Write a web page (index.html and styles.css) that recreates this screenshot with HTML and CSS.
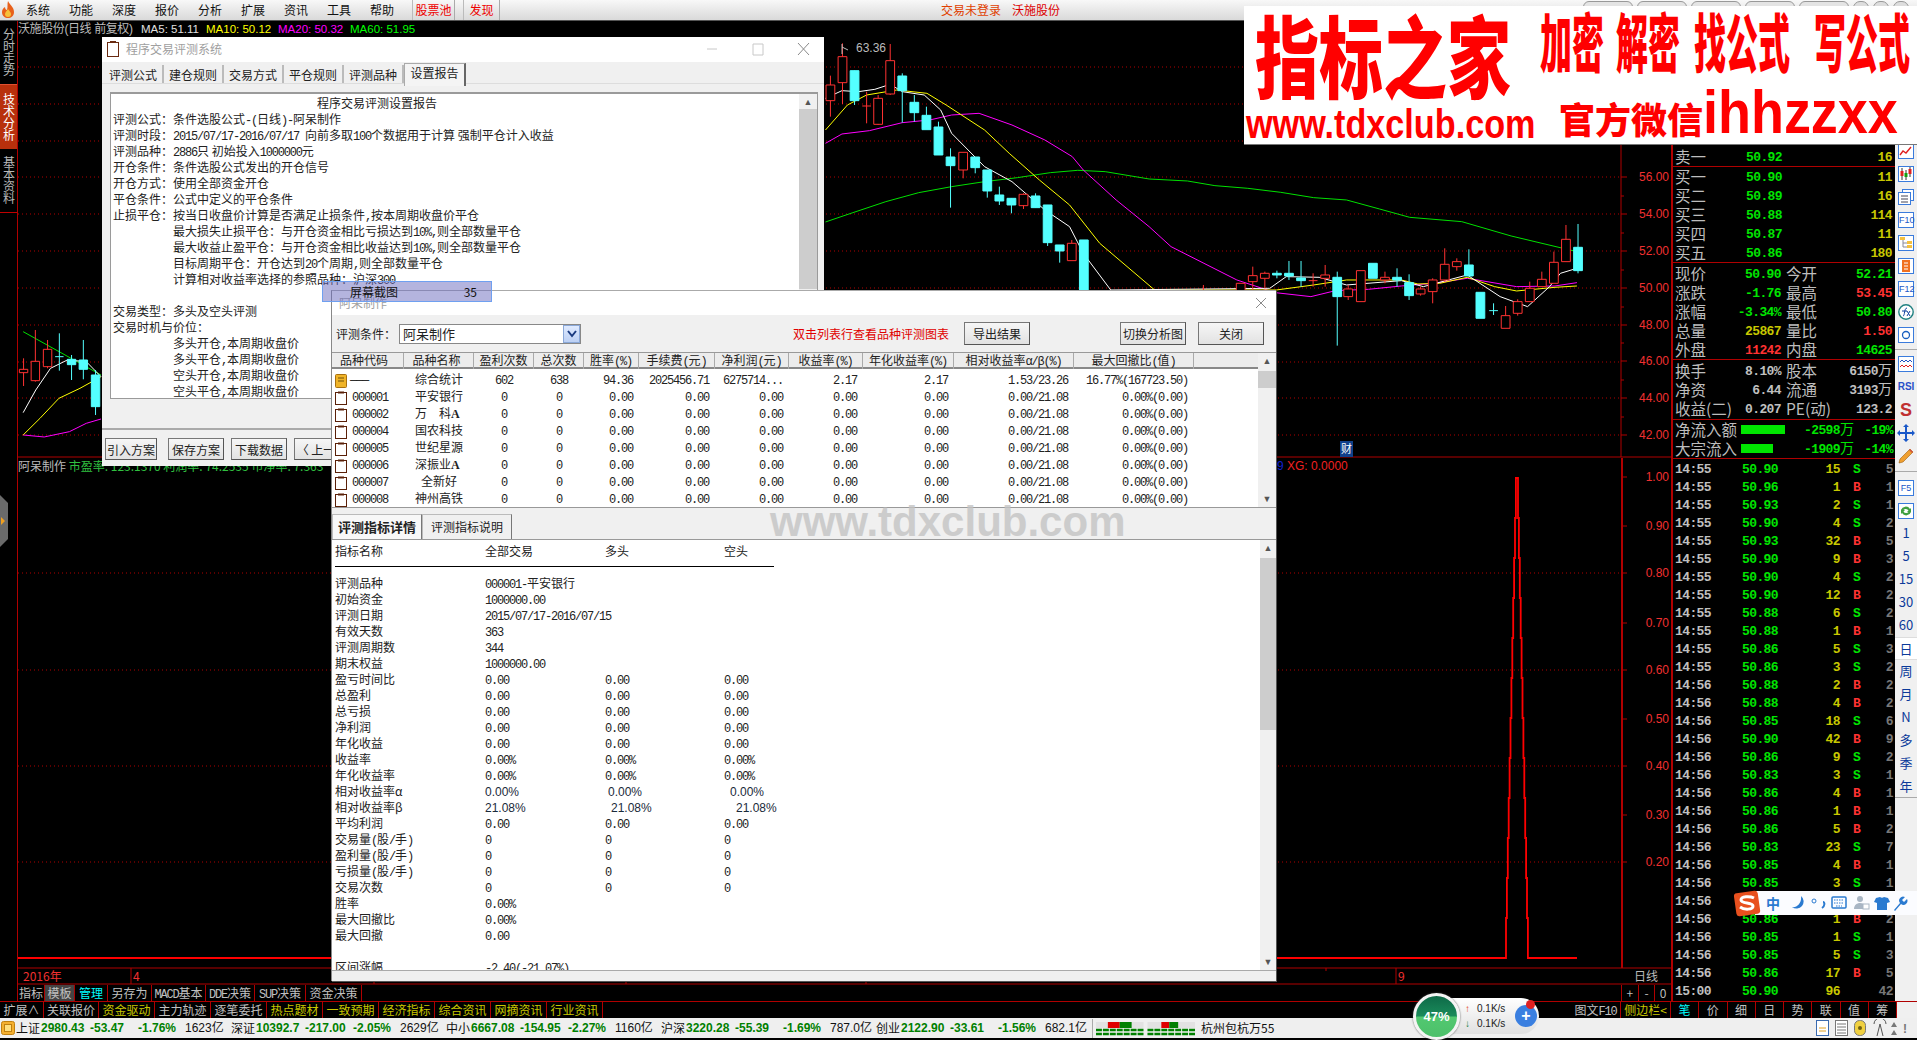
FILE: index.html
```html
<!DOCTYPE html>
<html lang="zh-CN">
<head>
<meta charset="utf-8">
<title>程序交易评测系统</title>
<link rel="stylesheet" href="styles.css">
</head>
<body>
<div class="desktop">
  <header class="topbar">
    <svg class="logo" viewBox="0 0 14 18" width="14" height="18"><path d="M7 0C9 4 13 6 13 11c0 4-3 6-6 6S1 15 1 11c0-2 1-4 3-5 0 2 1 3 2 3C7 6 6 3 7 0z" fill="#e8601a"/><path d="M7 8c1 2 3 3 3 5s-1 3-3 3-3-1-3-3 2-3 3-5z" fill="#f6c13a"/></svg>
    <nav class="menu">
      <span>系统</span><span>功能</span><span>深度</span><span>报价</span><span>分析</span><span>扩展</span><span>资讯</span><span>工具</span><span>帮助</span>
    </nav>
    <span class="menu-red first">股票池</span><span class="menu-red second">发现</span>
    <span class="login">交易未登录</span><span class="stockname">沃施股份</span>
    <div class="winbtns"><i class="pill"></i><i class="pill"></i><i class="pill"></i><i class="pill"></i><i class="pill"></i><i class="dot"></i><i class="dot"></i><i class="dot"></i></div>
  </header>

  <div class="main">
    <aside class="sidetabs">
      <div class="vtab"><span>分时走势</span></div>
      <div class="vtab on"><span>技术分析</span></div>
      <div class="vtab last"><span>基本资料</span></div>
    </aside>

    <section class="chartcol">
      <div class="infoline"><span class="gr">沃施股份(日线 前复权)</span><span class="wh">MA5: 51.11</span><span class="ye">MA10: 50.12</span><span class="mg">MA20: 50.32</span><span class="gn">MA60: 51.95</span></div>
      <svg class="chart" viewBox="18 37 1653 948" width="1653" height="948">
        <g class="grid">
          <path d="M18 67H1621M18 104H1621M18 141H1621M18 177H1621M18 214H1621M18 251H1621M18 288H1621M18 325H1621M18 362H1621M18 398H1621M18 435H1621"/>
          <path d="M18 573H1621M18 670H1621M18 766H1621M18 862H1621"/>
        </g>
        <g class="frame">
          <path d="M1621 37V457M18 457H1671M18 968H1671M18 984H1671M131 968V984M1396 968V984"/>
          <path d="M1621 177h6M1621 196h3M1621 214h6M1621 233h3M1621 251h6M1621 270h3M1621 288h6M1621 307h3M1621 325h6M1621 343h3M1621 361h6M1621 380h3M1621 398h6M1621 417h3M1621 435h6"/>
          <path d="M1621 477h6M1621 526h6M1621 573h6M1621 623h6M1621 670h6M1621 719h6M1621 766h6M1621 815h6M1621 862h6"/>
          <path d="M374 984v-3M626 984v-3M866 984v-3M1326 968v3"/>
        </g>
        <path class="axisbox" d="M1622 458V968"/>
        <g class="axislabels">
          <text x="1669" y="181">56.00</text><text x="1669" y="218">54.00</text><text x="1669" y="255">52.00</text><text x="1669" y="292">50.00</text><text x="1669" y="329">48.00</text><text x="1669" y="365">46.00</text><text x="1669" y="402">44.00</text><text x="1669" y="439">42.00</text>
          <text x="1669" y="481">1.00</text><text x="1669" y="530">0.90</text><text x="1669" y="577">0.80</text><text x="1669" y="627">0.70</text><text x="1669" y="674">0.60</text><text x="1669" y="723">0.50</text><text x="1669" y="770">0.40</text><text x="1669" y="819">0.30</text><text x="1669" y="866">0.20</text>
        </g>
        <g transform="translate(820 30) scale(.5485 .3333)">
          <path class="ma gnl" d="M10 576L60 548 120 515 180 488 240 470 300 455 360 443 420 428 470 421 520 425 600 447 670 453 720 467 780 475 840 487 900 503 960 510 1020 537 1075 562 1170 575 1260 618 1380 665"/>
          <path class="ma mgl" d="M10 340L40 312 90 302 150 278 200 270 240 255 290 250 350 285 410 330 460 380 480 420 540 510 600 590 640 650 700 700 760 750 830 788 895 800 940 782 1000 778 1060 768 1120 760 1180 745 1270 770 1340 768 1380 758"/>
          <path class="ma yel" d="M10 300L50 225 85 195 140 180 195 190 230 225 300 300 345 370 400 450 455 525 510 640 610 780 832 780 900 765 960 750 1060 750 1090 762 1130 760 1180 742 1230 770 1270 783 1340 772 1380 768"/>
          <path class="ma whl" d="M10 205L40 182 70 185 100 178 128 163 150 185 190 195 220 240 240 310 300 410 350 455 410 540 455 590 480 670 530 780 820 775 850 740 910 742 960 765 1060 752 1100 770 1180 735 1240 800 1290 830 1330 770 1350 730 1380 715"/>
          <path class="cr" d="M19 137V165M19 212V260M11 165h16V212h-16zM41 40V80M41 158V222M33 80h16V158h-16zM85 185V280M77 228h16M106 195V205M106 283V285M98 205h16V283h-16zM128 42V92M128 192V195M120 92h16V192h-16zM261 420V445M253 367h16V420h-16zM371 490V493M371 527V537M363 493h16V527h-16zM459 630V640M451 640h16V692h-16zM699 765V780M759 760h16V790h-16zM789 710V737M781 737h16V755h-16zM789 755V780M811 725V730M803 730h16V745h-16zM811 745V775M899 730V770M891 752h16M921 705V735M913 735h16V745h-16zM921 745V770M963 765V777M955 777h16V800h-16zM963 800V810M978 722h16V815h-16zM1030 725V742M1022 742h16V750h-16zM1030 750V760M1095 770V777M1087 777h16V792h-16zM1095 792V797M1117 745V750M1109 750h16V785h-16zM1117 785V820M1139 655V703M1131 703h16V750h-16zM1139 750V755M1161 685V695M1153 695h16V710h-16zM1161 710V722M1250 828V857M1242 857h16V895h-16zM1272 808V815M1264 815h16V850h-16zM1272 850V857M1294 755V775M1286 775h16V815h-16zM1316 725V748M1308 748h16V770h-16zM1338 665V697M1330 697h16V760h-16zM1360 585V628M1352 628h16V695h-16z"/>
          <path class="cy" d="M63 122V225M55 122h16V212h-16zM150 130V278M142 138h16V182h-16zM172 195V275M164 217h16V248h-16zM194 230V256M186 256h16V299h-16zM216 275V291M208 291h16V375h-16zM238 355V533M230 381h16V407h-16zM283 381V430M275 381h16V413h-16zM305 420V503M297 420h16V483h-16zM327 470V525M319 495h16V513h-16zM349 505V550M341 505h16V525h-16zM393 490V533M385 498h16V533h-16zM415 525V648M407 525h16V638h-16zM437 645V698M429 645h16V663h-16zM473 630h16V780h-16zM833 722V745M825 730h16V735h-16zM855 693V750M847 730h16V738h-16zM877 693V770M869 744h16V752h-16zM943 725V947M935 742h16V800h-16zM1000 700h16V745h-16zM1052 715V770M1044 742h16V750h-16zM1074 733V810M1066 758h16V797h-16zM1183 658V738M1175 705h16V738h-16zM1196 787h16V865h-16zM1228 820V855M1220 842h16M1382 582V730M1374 652h16V722h-16z"/>
        </g>
        <g transform="translate(0 280) scale(.4209 .3333)">
          <path class="ma gnl" d="M55 155L240 285"/>
          <path class="ma mgl" d="M55 465L105 471 165 455 205 430 240 417"/>
          <path class="ma yel" d="M55 465L95 415 140 355 190 325 240 290"/>
          <path class="ma whl" d="M55 398L85 330 120 265 160 240 205 245 240 290"/>
          <path class="cr" d="M56 235V268M56 278V318M46 268h20V278h-20zM84 150V244M84 302V305M74 244h20V302h-20zM113 180V208M113 260V265M103 208h20V260h-20z"/>
          <path class="cy" d="M141 160V272M131 230h20M170 225V300M160 238h20V254h-20zM198 180V298M188 240h20V268h-20zM227 270V405M217 285h20V380h-20z"/>
        </g>
        <path class="mark" d="M842 44v10M842 47l6 3"/>
        <text class="marktext" x="856" y="52">63.36</text>
        <rect class="caibg" x="1340" y="441" width="13" height="16"/>
        <text class="caitext" x="1341" y="453">财</text>
        <text class="subhead" x="18" y="471"><tspan class="t-gr">阿呆制作 </tspan><tspan class="t-gn">市盈率: 123.1370 利润率: 74.2535 市净率: 7.363</tspan></text>
        <text class="subhead2" x="1277" y="470"><tspan class="t-bl">9 </tspan><tspan class="t-rd">XG: 0.0000</tspan></text>
        <path class="pyr" d="M18 958H1506V918h.9V878h.9V838h.9V798h.9V758h.9V718h.9V678h.9V638h.9V598h.9V558h.9V518h.9V478H1518V518h.9V558h.9V598h.9V638h.9V678h.9V718h.9V758h.9V798h.9V838h.9V878h.9V918h.9V958H1577"/>
        <text class="xlab" x="23" y="981">2016年</text><text class="xlab" x="133" y="981">4</text><text class="xlab" x="1398" y="981">9</text>
        <text class="rixian" x="1634" y="981">日线</text>
      </svg>
      <div class="tabrow1">
        <div class="tabs1">
          <span class="tb w27">指标</span><span class="tb w30 sel">模板</span><span class="tb w33 cy-t">管理</span><span class="tb w44">另存为</span><span class="tb w54"><span class="n">MACD</span>基本</span><span class="tb w49"><span class="n">DDE</span>决策</span><span class="tb w51"><span class="n">SUP</span>决策</span><span class="tb w56">资金决策</span>
        </div>
        <div class="pm"><span>+</span><span>-</span><span>0</span></div>
      </div>
    </section>

    <section class="quotes">
      <div class="qblock first">
        <div class="bk"><span class="l">卖一</span><span class="gnv">50.92</span><span class="yev r">16</span></div>
      </div>
      <div class="qblock">
        <div class="bk"><span class="l">买一</span><span class="gnv">50.90</span><span class="yev r">11</span></div>
        <div class="bk"><span class="l">买二</span><span class="gnv">50.89</span><span class="yev r">16</span></div>
        <div class="bk"><span class="l">买三</span><span class="gnv">50.88</span><span class="yev r">114</span></div>
        <div class="bk"><span class="l">买四</span><span class="gnv">50.87</span><span class="yev r">11</span></div>
        <div class="bk"><span class="l">买五</span><span class="gnv">50.86</span><span class="yev r">180</span></div>
      </div>
      <div class="qblock pt1">
        <div class="qr"><span class="l">现价</span><span class="gnv r">50.90</span><span class="l l2">今开</span><span class="gnv r">52.21</span></div>
        <div class="qr"><span class="l">涨跌</span><span class="gnv r">-1.76</span><span class="l l2">最高</span><span class="rdv r">53.45</span></div>
        <div class="qr"><span class="l">涨幅</span><span class="gnv r">-3.34%</span><span class="l l2">最低</span><span class="gnv r">50.80</span></div>
        <div class="qr"><span class="l">总量</span><span class="yev r">25867</span><span class="l l2">量比</span><span class="rdv r">1.50</span></div>
        <div class="qr"><span class="l">外盘</span><span class="rdv r">11242</span><span class="l l2">内盘</span><span class="gnv r">14625</span></div>
      </div>
      <div class="qblock pt1 pb1">
        <div class="qr"><span class="l">换手</span><span class="grv r">8.10%</span><span class="l l2">股本</span><span class="grv r">6150<span class="wan">万</span></span></div>
        <div class="qr"><span class="l">净资</span><span class="grv r">6.44</span><span class="l l2">流通</span><span class="grv r">3193<span class="wan">万</span></span></div>
        <div class="qr"><span class="l">收益(二)</span><span class="grv r">0.207</span><span class="l l2">PE(动)</span><span class="grv r">123.2</span></div>
      </div>
      <div class="qblock">
        <div class="fl"><span class="l">净流入额</span><span class="barcell"><i class="bar w44b"></i></span><span class="gnv r">-2598<span class="wan">万</span></span><span class="gnv r">-19%</span></div>
        <div class="fl"><span class="l">大宗流入</span><span class="barcell"><i class="bar w32b"></i></span><span class="gnv r">-1909<span class="wan">万</span></span><span class="gnv r">-14%</span></div>
      </div>
      <div class="ticks">
        <div class="tk"><span class="grv">14:55</span><span class="gnv">50.90</span><span class="yev r">15</span><span class="gnv">S</span><span class="dim r">5</span></div>
        <div class="tk"><span class="grv">14:55</span><span class="gnv">50.96</span><span class="yev r">1</span><span class="rdv">B</span><span class="dim r">1</span></div>
        <div class="tk"><span class="grv">14:55</span><span class="gnv">50.93</span><span class="yev r">2</span><span class="gnv">S</span><span class="dim r">1</span></div>
        <div class="tk"><span class="grv">14:55</span><span class="gnv">50.90</span><span class="yev r">4</span><span class="gnv">S</span><span class="dim r">2</span></div>
        <div class="tk"><span class="grv">14:55</span><span class="gnv">50.93</span><span class="yev r">32</span><span class="rdv">B</span><span class="dim r">5</span></div>
        <div class="tk"><span class="grv">14:55</span><span class="gnv">50.90</span><span class="yev r">9</span><span class="rdv">B</span><span class="dim r">3</span></div>
        <div class="tk"><span class="grv">14:55</span><span class="gnv">50.90</span><span class="yev r">4</span><span class="gnv">S</span><span class="dim r">2</span></div>
        <div class="tk"><span class="grv">14:55</span><span class="gnv">50.90</span><span class="yev r">12</span><span class="rdv">B</span><span class="dim r">2</span></div>
        <div class="tk"><span class="grv">14:55</span><span class="gnv">50.88</span><span class="yev r">6</span><span class="gnv">S</span><span class="dim r">2</span></div>
        <div class="tk"><span class="grv">14:55</span><span class="gnv">50.88</span><span class="yev r">1</span><span class="rdv">B</span><span class="dim r">1</span></div>
        <div class="tk"><span class="grv">14:55</span><span class="gnv">50.86</span><span class="yev r">5</span><span class="gnv">S</span><span class="dim r">3</span></div>
        <div class="tk"><span class="grv">14:55</span><span class="gnv">50.86</span><span class="yev r">3</span><span class="gnv">S</span><span class="dim r">2</span></div>
        <div class="tk"><span class="grv">14:56</span><span class="gnv">50.88</span><span class="yev r">2</span><span class="rdv">B</span><span class="dim r">2</span></div>
        <div class="tk"><span class="grv">14:56</span><span class="gnv">50.88</span><span class="yev r">4</span><span class="rdv">B</span><span class="dim r">2</span></div>
        <div class="tk"><span class="grv">14:56</span><span class="gnv">50.85</span><span class="yev r">18</span><span class="gnv">S</span><span class="dim r">6</span></div>
        <div class="tk"><span class="grv">14:56</span><span class="gnv">50.90</span><span class="yev r">42</span><span class="rdv">B</span><span class="dim r">9</span></div>
        <div class="tk"><span class="grv">14:56</span><span class="gnv">50.86</span><span class="yev r">9</span><span class="gnv">S</span><span class="dim r">2</span></div>
        <div class="tk"><span class="grv">14:56</span><span class="gnv">50.83</span><span class="yev r">3</span><span class="gnv">S</span><span class="dim r">1</span></div>
        <div class="tk"><span class="grv">14:56</span><span class="gnv">50.86</span><span class="yev r">4</span><span class="rdv">B</span><span class="dim r">1</span></div>
        <div class="tk"><span class="grv">14:56</span><span class="gnv">50.86</span><span class="yev r">1</span><span class="rdv">B</span><span class="dim r">1</span></div>
        <div class="tk"><span class="grv">14:56</span><span class="gnv">50.86</span><span class="yev r">5</span><span class="rdv">B</span><span class="dim r">2</span></div>
        <div class="tk"><span class="grv">14:56</span><span class="gnv">50.83</span><span class="yev r">23</span><span class="gnv">S</span><span class="dim r">7</span></div>
        <div class="tk"><span class="grv">14:56</span><span class="gnv">50.85</span><span class="yev r">4</span><span class="rdv">B</span><span class="dim r">1</span></div>
        <div class="tk"><span class="grv">14:56</span><span class="gnv">50.85</span><span class="yev r">3</span><span class="gnv">S</span><span class="dim r">1</span></div>
        <div class="tk"><span class="grv">14:56</span><span class="gnv">50.85</span><span class="yev r">3</span><span class="gnv">S</span><span class="dim r">1</span></div>
        <div class="tk"><span class="grv">14:56</span><span class="gnv">50.86</span><span class="yev r">1</span><span class="rdv">B</span><span class="dim r">2</span></div>
        <div class="tk"><span class="grv">14:56</span><span class="gnv">50.85</span><span class="yev r">1</span><span class="gnv">S</span><span class="dim r">1</span></div>
        <div class="tk"><span class="grv">14:56</span><span class="gnv">50.85</span><span class="yev r">5</span><span class="gnv">S</span><span class="dim r">3</span></div>
        <div class="tk"><span class="grv">14:56</span><span class="gnv">50.86</span><span class="yev r">17</span><span class="rdv">B</span><span class="dim r">5</span></div>
        <div class="tk"><span class="grv">15:00</span><span class="gnv">50.90</span><span class="yev r">96</span><span class="gnv"></span><span class="dim r">42</span></div>
      </div>
    </section>

    <aside class="toolbar">
      <div class="ti"><svg class="ic" viewBox="0 0 16 16"><rect x=".5" y=".5" width="15" height="15" fill="#fff" stroke="#3a7bdc"/><path d="M2 12l3-4 3 2 5-6" fill="none" stroke="#e02020" stroke-width="1.4"/></svg></div>
      <div class="ti"><svg class="ic" viewBox="0 0 16 16"><rect x=".5" y=".5" width="15" height="15" fill="#fff" stroke="#3a7bdc"/><path d="M4 2v12M8 4v10M12 1v10" stroke="#333"/><path d="M2.500 5h3v5h-3zM10.500 3h3v5h-3z" fill="#e02020"/><path d="M6.500 7h3v4h-3z" fill="#10a010"/></svg></div>
      <div class="ti"><svg class="ic" viewBox="0 0 16 16"><rect x="4.500" y=".5" width="11" height="11" fill="#fff" stroke="#3a7bdc"/><rect x=".5" y="3.500" width="12" height="12" fill="#fff" stroke="#3a7bdc"/><path d="M3 7h7M3 10h7M3 13h7" stroke="#445"/></svg></div>
      <div class="ti"><span class="boxed">F10</span></div>
      <div class="ti"><svg class="ic" viewBox="0 0 16 16"><rect x=".5" y=".5" width="15" height="15" fill="#fff" stroke="#3a7bdc"/><path d="M5 4v8h4M5 8h4" fill="none" stroke="#889"/><path d="M2 2h5v3H2zM9 6h5v3H9zM9 10h5v3H9z" fill="#f4c040"/></svg></div>
      <div class="ti"><svg class="ic" viewBox="0 0 16 16"><rect x=".5" y=".5" width="15" height="15" fill="#fff" stroke="#3a7bdc"/><path d="M4 2h8v12H4z" fill="#f07020"/><path d="M6 5h4M6 8h4M6 11h4" stroke="#fff"/></svg></div>
      <div class="ti"><span class="boxed">F12</span></div>
      <div class="ti"><svg class="ic" viewBox="0 0 16 16"><circle cx="8" cy="8" r="7.200" fill="#fff" stroke="#208080" stroke-width="1.400"/><path d="M5 12c2 0 1-8 4-8M4 7h5M9 7l3 5M12 7l-3 5" fill="none" stroke="#1040a0"/></svg></div>
      <div class="ti"><svg class="ic" viewBox="0 0 16 16"><rect x=".5" y=".5" width="15" height="15" fill="#fff" stroke="#3a7bdc"/><circle cx="8" cy="8" r="3.500" fill="none" stroke="#1a60c0" stroke-width="1.300"/></svg></div>
      <div class="tsep s6"></div>
      <div class="ti"><svg class="ic" viewBox="0 0 16 16"><rect x=".5" y=".5" width="15" height="15" fill="#fff" stroke="#3a7bdc"/><path d="M2 6l2-2 2 2 2-2 2 2 2-2 2 2" fill="none" stroke="#2050c0"/><path d="M2 11l2-2 2 2 2-2 2 2 2-2 2 2" fill="none" stroke="#e02020"/></svg></div>
      <div class="ti"><span class="rsi">RSI</span></div>
      <div class="ti"><span class="sbig">S</span></div>
      <div class="ti"><svg class="ic big" viewBox="0 0 18 18"><path d="M9 0l3 3h-2v5h5V6l3 3-3 3v-2h-5v5h2l-3 3-3-3h2v-5H3v2L0 9l3-3v2h5V3H6z" fill="#1a58c8"/></svg></div>
      <div class="ti"><svg class="ic big" viewBox="0 0 18 18"><path d="M3 12L13 2l3 3L6 15l-4 1z" fill="#f0a030" stroke="#a06010" stroke-width=".6"/><path d="M13 2l3 3-1 1-3-3z" fill="#d05040"/></svg></div>
      <div class="tsep s9"></div>
      <div class="ti"><span class="boxed">F5</span></div>
      <div class="ti"><svg class="ic" viewBox="0 0 16 16"><rect x=".5" y=".5" width="15" height="15" fill="#fff" stroke="#3a7bdc"/><path d="M3 7a5 5 0 0 1 9-1l1-1v4H9l1.500-1.500A3 3 0 0 0 5 8zM13 9a5 5 0 0 1-9 1l-1 1V7h4L5.500 8.500A3 3 0 0 0 11 8z" fill="#40a040"/></svg></div>
      <div class="tt">1</div><div class="tt">5</div><div class="tt">15</div><div class="tt">30</div><div class="tt">60</div>
      <div class="tt sel">日</div><div class="tt">周</div><div class="tt">月</div><div class="tt">N</div><div class="tt">多</div><div class="tt">季</div><div class="tt end">年</div>
    </aside>
  </div>

  <div class="tabrow2">
    <div class="tabs2">
      <span class="t2 w44">扩展∧</span><span class="t2 w55">关联报价</span><span class="t2 w56 y">资金驱动</span><span class="t2 w56">主力轨迹</span><span class="t2 w56">逐笔委托</span><span class="t2 w56 y">热点题材</span><span class="t2 w56 y">一致预期</span><span class="t2 w56 y">经济指标</span><span class="t2 w56 y">综合资讯</span><span class="t2 w56 y">网摘资讯</span><span class="t2 w56 y">行业资讯</span>
    </div>
    <div class="tabs2r">
      <span class="t2 w50">图文<span class="n">F10</span></span><span class="t2 w50 y">侧边栏&lt;</span>
      <span class="t2 w28 cy-t">笔</span><span class="t2 w28">价</span><span class="t2 w28">细</span><span class="t2 w28">日</span><span class="t2 w28">势</span><span class="t2 w28">联</span><span class="t2 w28">值</span><span class="t2 w28">筹</span>
    </div>
    <div class="tabfill"></div>
  </div>

  <footer class="statusbar">
    <svg class="sicon" viewBox="0 0 14 14" width="14" height="14"><rect x=".5" y=".5" width="13" height="13" rx="2" fill="#f4b030" stroke="#c08010"/><rect x="3.500" y="3.500" width="7" height="7" fill="#ffe080" stroke="#c08010"/></svg>
    <div class="idx"><span>上证</span><b>2980.43</b><b>-53.47</b><b>-1.76%</b><span>1623亿</span></div>
    <div class="idx"><span>深证</span><b>10392.7</b><b>-217.00</b><b>-2.05%</b><span>2629亿</span></div>
    <div class="idx"><span>中小</span><b>6667.08</b><b>-154.95</b><b>-2.27%</b><span>1160亿</span></div>
    <div class="idx"><span>沪深</span><b>3220.28</b><b>-55.39</b><b>-1.69%</b><span>787.0亿</span></div>
    <div class="idx"><span>创业</span><b>2122.90</b><b>-33.61</b><b>-1.56%</b><span>682.1亿</span></div>
    <svg class="sbars" viewBox="0 0 104 19" width="104" height="19">
      <path d="M3 3h48v6H3zM55 3h48v6H55z" fill="#e2e2e2"/>
      <path d="M15 3h12v6H15zM69 3h8v6h-8z" fill="#e00000"/>
      <path d="M27 3h12v6H27zM77 3h9v6h-9z" fill="#008000"/>
      <path d="M3 11h48M3 15h48M55 11h48M55 15h48" stroke="#008000" stroke-width="2.500" stroke-dasharray="6 1" fill="none"/>
    </svg>
    <span class="place">杭州包杭万55</span>
    <div class="stray">
      <svg viewBox="0 0 95 18" width="95" height="18">
        <rect x=".5" y="1.500" width="12" height="15" fill="#fff" stroke="#3a6ab0"/><path d="M3 9h7M3 12h7" stroke="#e0a020"/>
        <rect x="19.500" y="1.500" width="12" height="15" fill="#fff" stroke="#777"/><path d="M21 5h9M21 8h9M21 11h9M21 14h9" stroke="#777"/>
        <rect x="38.500" y="1.500" width="11" height="15" rx="5" fill="#f0d040" stroke="#777"/><circle cx="44" cy="9" r="2" fill="#706010"/>
        <path d="M61 17l3-12 3 12M58 5a6 6 0 0 1 12 0" fill="none" stroke="#555"/>
        <path d="M78 3l3 5h-6zM78 11l3 5h-6z" fill="#777"/><text class="excl" x="87" y="14">!</text>
      </svg>
    </div>
  </footer>

  <section class="win win1">
    <div class="titlebar t1b">
      <svg class="ttlicon" viewBox="0 0 12 17" width="12" height="17"><rect x=".5" y="2.500" width="11" height="14" fill="#fff" stroke="#6a2a10"/><path d="M3 2.500h6V1H3z" fill="#6a2a10"/></svg>
      <span class="ttl">程序交易评测系统</span>
      <span class="wctl"><svg viewBox="0 0 110 14" width="110" height="14"><path class="fade" d="M1 7h10M47 2h10v11H47z"/><path class="xx" d="M92 1l11 12M103 1L92 13"/></svg></span>
    </div>
    <div class="w1tabs">
      <span class="w1tab">评测公式</span><span class="w1tab">建仓规则</span><span class="w1tab">交易方式</span><span class="w1tab">平仓规则</span><span class="w1tab">评测品种</span><span class="w1tab on">设置报告</span>
    </div>
    <div class="report">
      <div class="rbody">
        <div class="rtitle">程序交易评测设置报告</div>
        <div>评测公式：条件选股公式<span class="n">-(</span>日线<span class="n">)-</span>阿呆制作</div>
        <div>评测时段：<span class="n">2015/07/17-2016/07/17 </span>向前多取<span class="n">100</span>个数据用于计算 强制平仓计入收益</div>
        <div>评测品种：<span class="n">2886</span>只 初始投入<span class="n">1000000</span>元</div>
        <div>开仓条件：条件选股公式发出的开仓信号</div>
        <div>开仓方式：使用全部资金开仓</div>
        <div>平仓条件：公式中定义的平仓条件</div>
        <div>止损平仓：按当日收盘价计算是否满足止损条件<span class="n">,</span>按本周期收盘价平仓</div>
        <div class="ind">最大损失止损平仓：与开仓资金相比亏损达到<span class="n">10%,</span>则全部数量平仓</div>
        <div class="ind">最大收益止盈平仓：与开仓资金相比收益达到<span class="n">10%,</span>则全部数量平仓</div>
        <div class="ind">目标周期平仓：开仓达到<span class="n">20</span>个周期<span class="n">,</span>则全部数量平仓</div>
        <div class="ind">计算相对收益率选择的参照品种：沪深<span class="n">300</span></div>
        <div></div>
        <div>交易类型：多头及空头评测</div>
        <div>交易时机与价位：</div>
        <div class="ind">多头开仓<span class="n">,</span>本周期收盘价</div>
        <div class="ind">多头平仓<span class="n">,</span>本周期收盘价</div>
        <div class="ind">空头开仓<span class="n">,</span>本周期收盘价</div>
        <div class="ind">空头平仓<span class="n">,</span>本周期收盘价</div>
      </div>
      <div class="rscroll"><span class="arrow">▲</span><i class="rthumb"></i></div>
    </div>
    <div class="w1foot">
      <span class="btn bw52">引入方案</span><span class="btn bw56 ml11">保存方案</span><span class="btn bw56 ml7">下载数据</span><span class="btn bw56 ml7">〈 上一步</span>
    </div>
  </section>

  <section class="win win2">
    <div class="titlebar t2b">
      <span class="ttl">阿呆制作</span>
      <svg class="close" viewBox="0 0 12 12" width="12" height="12"><path class="xx" d="M1 1l10 10M11 1L1 11"/></svg>
    </div>
    <div class="w2tool">
      <span class="cond">评测条件：</span>
      <span class="combo"><span>阿呆制作</span><i class="cbtn"><svg viewBox="0 0 10 8" width="10" height="8"><path d="M1 1l4 5 4-5" fill="none" stroke="#1a3a80" stroke-width="2"/></svg></i></span>
      <span class="hint">双击列表行查看品种评测图表</span>
      <span class="btn big out">导出结果</span>
      <span class="btn big sw">切换分析图</span>
      <span class="btn big cl">关闭</span>
    </div>
    <div class="list">
      <div class="lmain">
        <div class="lrow lhead"><span>品种代码</span><span>品种名称</span><span>盈利次数</span><span>总次数</span><span>胜率<span class="n">(%)</span></span><span>手续费<span class="n">(</span>元<span class="n">)</span></span><span>净利润<span class="n">(</span>元<span class="n">)</span></span><span>收益率<span class="n">(%)</span></span><span>年化收益率<span class="n">(%)</span></span><span>相对收益率<span class="n">α/β(%)</span></span><span>最大回撤比<span class="n">(</span>值<span class="n">)</span></span></div>
        <div class="lbody">
          <div class="lrow"><span class="code"><svg class="fic" viewBox="0 0 12 14"><rect x=".5" y=".5" width="11" height="13" rx="1" fill="#f0b428" stroke="#a87010"/><path d="M3 4h6M3 7h6" stroke="#705008"/></svg><span class="n">———</span></span><span class="nm">综合统计</span><span class="c n">602</span><span class="c n">638</span><span class="n ra">94.36</span><span class="n ra">2025456.71</span><span class="n ra">6275714...</span><span class="n ra">2.17</span><span class="n ra">2.17</span><span class="n ra">1.53/23.26</span><span class="n ra">16.77%(167723.50)</span></div>
          <div class="lrow"><span class="code"><svg class="pic" viewBox="0 0 12 14"><rect x=".5" y="1.500" width="11" height="12" fill="#fff" stroke="#5a2008"/><path d="M3 1.500h6" stroke="#5a2008" stroke-width="2"/></svg><span class="n">000001</span></span><span class="nm">平安银行</span><span class="c n">0</span><span class="c n">0</span><span class="n ra">0.00</span><span class="n ra">0.00</span><span class="n ra">0.00</span><span class="n ra">0.00</span><span class="n ra">0.00</span><span class="n ra">0.00/21.08</span><span class="n ra">0.00%(0.00)</span></div>
          <div class="lrow"><span class="code"><svg class="pic" viewBox="0 0 12 14"><rect x=".5" y="1.500" width="11" height="12" fill="#fff" stroke="#5a2008"/><path d="M3 1.500h6" stroke="#5a2008" stroke-width="2"/></svg><span class="n">000002</span></span><span class="nm">万　科<b class="ab">A</b></span><span class="c n">0</span><span class="c n">0</span><span class="n ra">0.00</span><span class="n ra">0.00</span><span class="n ra">0.00</span><span class="n ra">0.00</span><span class="n ra">0.00</span><span class="n ra">0.00/21.08</span><span class="n ra">0.00%(0.00)</span></div>
          <div class="lrow"><span class="code"><svg class="pic" viewBox="0 0 12 14"><rect x=".5" y="1.500" width="11" height="12" fill="#fff" stroke="#5a2008"/><path d="M3 1.500h6" stroke="#5a2008" stroke-width="2"/></svg><span class="n">000004</span></span><span class="nm">国农科技</span><span class="c n">0</span><span class="c n">0</span><span class="n ra">0.00</span><span class="n ra">0.00</span><span class="n ra">0.00</span><span class="n ra">0.00</span><span class="n ra">0.00</span><span class="n ra">0.00/21.08</span><span class="n ra">0.00%(0.00)</span></div>
          <div class="lrow"><span class="code"><svg class="pic" viewBox="0 0 12 14"><rect x=".5" y="1.500" width="11" height="12" fill="#fff" stroke="#5a2008"/><path d="M3 1.500h6" stroke="#5a2008" stroke-width="2"/></svg><span class="n">000005</span></span><span class="nm">世纪星源</span><span class="c n">0</span><span class="c n">0</span><span class="n ra">0.00</span><span class="n ra">0.00</span><span class="n ra">0.00</span><span class="n ra">0.00</span><span class="n ra">0.00</span><span class="n ra">0.00/21.08</span><span class="n ra">0.00%(0.00)</span></div>
          <div class="lrow"><span class="code"><svg class="pic" viewBox="0 0 12 14"><rect x=".5" y="1.500" width="11" height="12" fill="#fff" stroke="#5a2008"/><path d="M3 1.500h6" stroke="#5a2008" stroke-width="2"/></svg><span class="n">000006</span></span><span class="nm">深振业<b class="ab">A</b></span><span class="c n">0</span><span class="c n">0</span><span class="n ra">0.00</span><span class="n ra">0.00</span><span class="n ra">0.00</span><span class="n ra">0.00</span><span class="n ra">0.00</span><span class="n ra">0.00/21.08</span><span class="n ra">0.00%(0.00)</span></div>
          <div class="lrow"><span class="code"><svg class="pic" viewBox="0 0 12 14"><rect x=".5" y="1.500" width="11" height="12" fill="#fff" stroke="#5a2008"/><path d="M3 1.500h6" stroke="#5a2008" stroke-width="2"/></svg><span class="n">000007</span></span><span class="nm ind6">全新好</span><span class="c n">0</span><span class="c n">0</span><span class="n ra">0.00</span><span class="n ra">0.00</span><span class="n ra">0.00</span><span class="n ra">0.00</span><span class="n ra">0.00</span><span class="n ra">0.00/21.08</span><span class="n ra">0.00%(0.00)</span></div>
          <div class="lrow"><span class="code"><svg class="pic" viewBox="0 0 12 14"><rect x=".5" y="1.500" width="11" height="12" fill="#fff" stroke="#5a2008"/><path d="M3 1.500h6" stroke="#5a2008" stroke-width="2"/></svg><span class="n">000008</span></span><span class="nm">神州高铁</span><span class="c n">0</span><span class="c n">0</span><span class="n ra">0.00</span><span class="n ra">0.00</span><span class="n ra">0.00</span><span class="n ra">0.00</span><span class="n ra">0.00</span><span class="n ra">0.00/21.08</span><span class="n ra">0.00%(0.00)</span></div>
        </div>
      </div>
      <div class="lscroll"><span class="arrow">▲</span><i class="lthumb"></i><span class="arrow dn">▼</span></div>
    </div>
    <div class="dtabs">
      <span class="dtab on">评测指标详情</span><span class="dtab">评测指标说明</span>
      <span class="watermark">www.tdxclub.com</span>
    </div>
    <div class="detail">
      <div class="dbody">
        <div class="dr"><span>指标名称</span><span>全部交易</span><span>多头</span><span>空头</span></div>
        <div class="dline"></div>
        <div class="dr"><span>评测品种</span><span><span class="n">000001-</span>平安银行</span></div>
        <div class="dr"><span>初始资金</span><span class="n">1000000.00</span></div>
        <div class="dr"><span>评测日期</span><span class="n">2015/07/17-2016/07/15</span></div>
        <div class="dr"><span>有效天数</span><span class="n">363</span></div>
        <div class="dr"><span>评测周期数</span><span class="n">344</span></div>
        <div class="dr"><span>期末权益</span><span class="n">1000000.00</span></div>
        <div class="dr"><span>盈亏时间比</span><span class="n">0.00</span><span class="n">0.00</span><span class="n">0.00</span></div>
        <div class="dr"><span>总盈利</span><span class="n">0.00</span><span class="n">0.00</span><span class="n">0.00</span></div>
        <div class="dr"><span>总亏损</span><span class="n">0.00</span><span class="n">0.00</span><span class="n">0.00</span></div>
        <div class="dr"><span>净利润</span><span class="n">0.00</span><span class="n">0.00</span><span class="n">0.00</span></div>
        <div class="dr"><span>年化收益</span><span class="n">0.00</span><span class="n">0.00</span><span class="n">0.00</span></div>
        <div class="dr"><span>收益率</span><span class="n">0.00%</span><span class="n">0.00%</span><span class="n">0.00%</span></div>
        <div class="dr"><span>年化收益率</span><span class="n">0.00%</span><span class="n">0.00%</span><span class="n">0.00%</span></div>
        <div class="dr alpha"><span>相对收益率α</span><span class="pv">0.00%</span><span class="pv">0.00%</span><span class="pv">0.00%</span></div>
        <div class="dr beta"><span>相对收益率β</span><span class="pv">21.08%</span><span class="pv">21.08%</span><span class="pv">21.08%</span></div>
        <div class="dr"><span>平均利润</span><span class="n">0.00</span><span class="n">0.00</span><span class="n">0.00</span></div>
        <div class="dr"><span>交易量<span class="n">(</span>股<span class="n">/</span>手<span class="n">)</span></span><span class="n">0</span><span class="n">0</span><span class="n">0</span></div>
        <div class="dr"><span>盈利量<span class="n">(</span>股<span class="n">/</span>手<span class="n">)</span></span><span class="n">0</span><span class="n">0</span><span class="n">0</span></div>
        <div class="dr"><span>亏损量<span class="n">(</span>股<span class="n">/</span>手<span class="n">)</span></span><span class="n">0</span><span class="n">0</span><span class="n">0</span></div>
        <div class="dr"><span>交易次数</span><span class="n">0</span><span class="n">0</span><span class="n">0</span></div>
        <div class="dr"><span>胜率</span><span class="n">0.00%</span></div>
        <div class="dr"><span>最大回撤比</span><span class="n">0.00%</span></div>
        <div class="dr"><span>最大回撤</span><span class="n">0.00</span></div>
        <div class="dr"></div>
        <div class="dr"><span>区间涨幅</span><span class="n">-2.40(-21.07%)</span></div>
      </div>
      <div class="dscroll"><span class="arrow">▲</span><i class="dthumb"></i><span class="arrow dn">▼</span></div>
    </div>
    <div class="w2foot"></div>
  </section>

  <div class="capture"><span>屏幕截图</span><span>35</span></div>

  <div class="banner">
    <span class="bt b1">指标之家</span>
    <span class="bt b2 p1">加密</span><span class="bt b2 p2">解密</span><span class="bt b2 p3">找公式</span><span class="bt b2 p4">写公式</span>
    <span class="bt b3">www.tdxclub.com</span>
    <span class="bt b4">官方微信</span>
    <span class="bt b5">ihhzzxx</span>
  </div>

  <div class="edgehandle"><svg viewBox="0 0 9 52" width="9" height="52"><path d="M0 0l8 8v36l-8 8z" fill="#6a6a6a"/><path d="M1 22l4 4-4 4z" fill="#f0a020"/></svg></div>

  <div class="ime">
    <svg class="imelogo" viewBox="0 0 28 27" width="28" height="27"><rect x="2" y="2" width="24" height="23" rx="3" transform="rotate(-8 14 13)" fill="#e8501e"/><path d="M21 8c-4-2-13-2-13 2s12 2 12 6-9 4-13 1" fill="none" stroke="#fff" stroke-width="3"/></svg>
    <span class="imezh">中</span>
    <svg viewBox="0 0 120 16" width="120" height="16">
      <path d="M13 1a7 7 0 1 1-9 11c5 1 10-4 9-11z" fill="#2a7ad0"/>
      <circle cx="26" cy="6" r="2" fill="none" stroke="#2a7ad0"/><path d="M35 7c2 0 2 4-1 6" fill="none" stroke="#2a7ad0" stroke-width="2"/>
      <rect x="44" y="2" width="14" height="11" rx="1" fill="none" stroke="#2a7ad0" stroke-width="1.500"/><path d="M46 5h10M46 8h10M48 11h6" stroke="#2a7ad0" stroke-dasharray="1.500 1"/>
      <circle cx="72" cy="4" r="3" fill="#a9b6c4"/><path d="M66 14c0-4 3-6 6-6s4 1 5 2v4z" fill="#a9b6c4"/><rect x="75" y="9" width="6" height="5" fill="#fff" stroke="#a9b6c4"/>
      <path d="M88 3l4-1c1 1 3 1 4 0l4 1 2 4-3 1v7h-10V8l-3-1z" fill="#2a7ad0"/>
      <path d="M106 15l6-7a4 4 0 0 1 5-6l-3 3 2 2 3-3a4 4 0 0 1-6 5l-6 7z" fill="#2a7ad0"/>
    </svg>
  </div>

  <div class="netw">
    <div class="netpill">
      <div class="netrow"><span class="upa">↑</span><span>0.1K/s</span></div>
      <div class="netrow"><span class="dna">↓</span><span>0.1K/s</span></div>
      <span class="plus">+</span><i class="reddot"></i>
    </div>
    <div class="netball"><span>47%</span></div>
  </div>
</div>
</body>
</html>
```

FILE: styles.css
```css
* { box-sizing: border-box; }
html, body { margin: 0; padding: 0; background: #000; }
body { font: 12px/16px "Noto Sans CJK SC", "Liberation Sans", sans-serif; color: #222; }
.desktop { position: relative; width: 1917px; height: 1040px; overflow: hidden; background: #000; }
.n { font-family: "Liberation Mono", monospace; letter-spacing: -1.2px; }

/* top bar */
.topbar { height: 21px; display: flex; align-items: center; background: linear-gradient(#f8f8f8, #d9d9d9); border-bottom: 1px solid #555; position: relative; }
.logo { margin-left: 1px; flex: none; }
.menu { display: flex; margin-left: 11px; color: #111; font-size: 12px; }
.menu span { width: 43px; }
.menu-red { color: #e00; height: 20px; line-height: 20px; text-align: center; border-right: 1px solid #aaa; border-left: 1px solid #bbb; }
.menu-red.first { width: 43px; margin-left: -1px; }
.menu-red.second { width: 37px; margin-left: 8px; }
.login { color: #e04000; margin-left: 441px; }
.stockname { color: #d00; margin-left: 11px; }
.winbtns { position: absolute; left: 1583px; top: 1px; display: flex; gap: 4px; }
.winbtns .pill { width: 50px; height: 14px; border: 1px solid #999; border-radius: 6px; background: #e4e4e4; }
.winbtns .dot { width: 16px; height: 14px; border: 1px solid #999; border-radius: 8px; background: #ddd; }

/* main */
.main { height: 980px; display: flex; }
.sidetabs { width: 18px; flex: none; border-right: 1px solid #b00000; color: #b8b8b8; }
.vtab { height: 63px; display: flex; justify-content: center; padding-top: 7px; }
.vtab span { writing-mode: vertical-rl; line-height: 14px; }
.vtab.on { background: #b8300c; color: #fff; border-top: 1px solid #e05030; height: 65px; padding-top: 8px; }
.vtab.last { border-bottom: 1px solid #c00000; height: 64px; }
.chartcol { width: 1653px; flex: none; display: flex; flex-direction: column; }
.infoline { height: 16px; line-height: 17px; font-size: 11.500px; white-space: nowrap; display: flex; font-family: "Liberation Sans", "Noto Sans CJK SC", sans-serif; }
.infoline .gr { color: #bdbdbd; width: 123px; font-size: 12px; letter-spacing: -.4px; }
.infoline .wh { color: #e0e0e0; width: 65px; }
.infoline .ye { color: #ff0; width: 72px; }
.infoline .mg { color: #f0f; width: 72px; }
.infoline .gn { color: #0f0; }
.chart { display: block; flex: none; }
.grid path { stroke: #b00000; stroke-dasharray: 1 3; fill: none; }
.frame path { stroke: #b00000; fill: none; }
.axisbox { stroke: #b00000; stroke-width: 2; fill: none; }
.axislabels text { fill: #f03030; font: 12px "Liberation Sans", sans-serif; text-anchor: end; }
.ma { fill: none; vector-effect: non-scaling-stroke; stroke-width: 1; }
.gnl { stroke: #00e000; }
.mgl { stroke: #f0f; }
.yel { stroke: #ff0; }
.whl { stroke: #fff; }
.cr { fill: #000; stroke: #ff3232; vector-effect: non-scaling-stroke; }
.cy { fill: #54ffff; stroke: #54ffff; vector-effect: non-scaling-stroke; }
.mark { stroke: #bbb; fill: none; }
.marktext { fill: #bbb; font: 12px "Liberation Sans", sans-serif; }
.caibg { fill: #10408a; }
.caitext { fill: #fff; font: 11px "Noto Sans CJK SC", sans-serif; }
.subhead { font: 12px "Noto Sans CJK SC", sans-serif; }
.subhead2 { font: 12px "Liberation Sans", sans-serif; }
.t-gr { fill: #bbb; }
.t-gn { fill: #30c040; }
.t-bl { fill: #1020d0; }
.t-rd { fill: #f02020; }
.pyr { fill: none; stroke: #f00; stroke-width: 1.800; }
.xlab { fill: #f03030; font: 12px "Noto Sans CJK SC", sans-serif; }
.rixian { fill: #bbb; font: 12px "Noto Sans CJK SC", sans-serif; }
.tabrow1 { height: 16px; display: flex; justify-content: space-between; }
.tabs1 { display: flex; }
.tb { display: block; text-align: center; color: #c0c0c0; border-right: 1px solid #b00000; height: 16px; line-height: 15px; }
.tb.sel { background: #444; }
.cy-t { color: #0ff !important; }
.w27 { width: 27px; } .w28 { width: 28.250px; } .w30 { width: 30px; } .w33 { width: 33px; } .w44 { width: 44px; } .w49 { width: 49px; } .w50 { width: 50px; } .w51 { width: 51px; } .w54 { width: 54px; } .w55 { width: 55px; } .w56 { width: 56px; }
.pm { display: flex; width: 50px; }
.pm span { flex: 1; text-align: center; color: #bbb; border-left: 1px solid #b00000; line-height: 15px; }

/* quotes */
.quotes { width: 224px; flex: none; border-left: 2px solid #b00000; padding-top: 124px; font: bold 13px/19px "Liberation Mono", monospace; letter-spacing: -.6px; color: #c0c0c0; padding-left: 2px; }
.qblock { border-bottom: 1px solid #b00000; margin-left: -2px; padding-left: 2px; }
.qblock.first { padding-top: 2px; }
.pt1 { padding-top: 1px; }
.pb1 { padding-bottom: 1px; }
.l { font: 15.500px/19px "Noto Sans CJK SC", sans-serif; letter-spacing: 0; color: #bdbdbd; white-space: nowrap; }
.r { text-align: right; }
.bk { height: 19px; line-height: 21px; display: grid; grid-template-columns: 71px 40px 106px; }
.qr { height: 19px; line-height: 21px; display: grid; grid-template-columns: 50px 56px 55px 56px; }
.l2 { padding-left: 5px; }
.fl { height: 19px; line-height: 21px; display: grid; grid-template-columns: 66px 59px 54px 39px; }
.gnv { color: #00e600; }
.yev { color: #c8c800; }
.rdv { color: #ff3232; }
.grv { color: #c0c0c0; }
.dim { color: #777; }
.wan { font: 14px/1 "Noto Sans CJK SC", sans-serif; letter-spacing: 0; }
.barcell { display: flex; align-items: center; height: 19px; }
.bar { display: block; height: 9px; background: #00e600; }
.w44b { width: 44px; }
.w32b { width: 32px; }
.ticks { padding-top: 1px; }
.tk { height: 18px; line-height: 20px; display: grid; grid-template-columns: 67px 40px 58px 26px 27px; }
.tk > :nth-child(4) { padding-left: 13px; }

/* toolbar */
.toolbar { width: 22px; flex: none; background: #f0f0f0; padding-top: 118px; color: #0b3a9a; }
.ti { height: 23px; display: flex; align-items: center; justify-content: center; }
.ic { width: 16px; height: 16px; display: block; }
.ic.big { width: 18px; height: 18px; }
.boxed { width: 16px; height: 16px; border: 1px solid #3a7bdc; background: #fff; color: #1a58c8; font: 9px/14px "Liberation Sans", sans-serif; text-align: center; }
.rsi { color: #2a50c8; font: bold 10px "Liberation Sans", sans-serif; }
.sbig { color: #c03030; font: bold 18px/20px "Liberation Sans", sans-serif; }
.tsep { border-bottom: 1px solid #aaa; }
.tsep.s6 { height: 4px; margin-bottom: 2px; }
.tsep.s9 { height: 5px; margin-bottom: 4px; }
.tt { height: 23px; text-align: center; font-size: 13px; line-height: 22px; }
.tt.sel { background: #fff; border: 1px solid #ddd; border-width: 1px 0; }
.tt.end { border-bottom: 1px solid #aaa; }

/* bottom tabs */
.tabrow2 { height: 17px; display: flex; border-top: 1px solid #b00000; }
.tabs2, .tabs2r { display: flex; }
.tabs2r { margin-left: 968px; }
.t2 { display: block; height: 16px; line-height: 15px; text-align: center; color: #c0c0c0; border-right: 1px solid #b00000; }
.t2.y { color: #c8c800; }
.tabfill { flex: 1; background: #f0f0f0; }

/* status */
.statusbar { height: 20px; background: #efefef; display: flex; align-items: center; color: #111; position: relative; padding-left: 1px; }
.sicon { flex: none; margin-right: 1px; }
.idx { width: 215px; flex: none; display: grid; grid-template-columns: 25px 49px 48px 47px 46px; white-space: nowrap; }
.idx b { color: #008000; font: bold 12px/16px "Liberation Sans", sans-serif; }
.idx span:last-child { font-family: "Liberation Sans", "Noto Sans CJK SC", sans-serif; }
.sbars { margin-left: 1px; border-left: 1px solid #aaa; flex: none; }
.place { margin-left: 5px; }
.stray { position: absolute; right: 6px; top: 1px; }
.excl { font: bold 12px "Liberation Sans", sans-serif; fill: #777; }

/* windows */
.win { position: absolute; background: #f0f0f0; }
.win1 { left: 102px; top: 37px; width: 722px; height: 429px; }
.win2 { left: 331px; top: 290px; width: 945px; height: 691px; border-top: 1px solid #aaa; border-left: 1px solid #888; box-shadow: 1px 1px 0 #555; }
.titlebar { height: 25px; background: #fff; display: flex; align-items: center; position: relative; }
.t1b { padding-bottom: 2px; }
.ttlicon { margin-left: 5px; flex: none; }
.ttl { color: #a0a0a0; margin-left: 7px; }
.t2b { height: 24px; }
.wctl { position: absolute; left: 604px; top: 5px; }
.fade { fill: none; stroke: #c8c8c8; }
.xx { fill: none; stroke: #8a8a8a; }
.close { position: absolute; right: 9px; top: 6px; }
.w1tabs { display: flex; height: 22px; padding: 3px 0 0 2px; border-bottom: 1px solid #ddd; }
.w1tab { width: 60px; text-align: center; line-height: 20px; border-right: 2px solid #bbb; }
.w1tab.on { background: #f4f4f4; border: 1px solid #aaa; border-width: 1px 2px 0 1px; border-right-color: #666; margin-top: -2px; width: 62px; line-height: 18px; height: 23px; }
.report { margin: 8px 6px 0 8px; height: 307px; background: #fff; border: 1px solid #9a9a9a; border-top-width: 2px; display: flex; }
.rbody { flex: 1; padding: 1px 0 0 2px; overflow: hidden; white-space: nowrap; }
.rbody > div { height: 16px; line-height: 16px; }
.rtitle { padding-left: 204px; }
.ind { padding-left: 60px; }
.rscroll { width: 18px; background: #f0f0f0; text-align: center; position: relative; }
.arrow { display: block; height: 16px; font: 9px/16px "Liberation Sans", sans-serif; color: #555; text-align: center; }
.rthumb { display: block; height: 180px; background: #cdcdcd; margin-top: -1px; }
.w1foot { margin-top: 29px; border-top: 2px solid #aaa; display: flex; padding: 8px 0 0 3px; }
.btn { height: 22px; text-align: center; line-height: 21px; border: 1px solid #777; border-right-color: #555; border-bottom-color: #555; background: linear-gradient(#f6f6f6, #e2e2e2); display: block; flex: none; white-space: nowrap; }
.bw52 { width: 52px; }
.bw56 { width: 56px; }
.ml11 { margin-left: 11px; }
.ml7 { margin-left: 7px; }

.w2tool { height: 37px; display: flex; align-items: center; padding-left: 4px; position: relative; }
.cond { width: 63px; }
.combo { width: 182px; height: 20px; border: 1px solid #888; background: #fff; display: flex; justify-content: space-between; line-height: 18px; padding-left: 3px; font-size: 13px; }
.cbtn { width: 17px; height: 18px; background: linear-gradient(#dfeaff, #bcd0f4); border: 1px solid #8aa8d8; display: flex; align-items: center; justify-content: center; }
.hint { color: #e00000; margin-left: 212px; }
.btn.big { height: 23px; width: 66px; }
.out { margin-left: 15px; }
.sw { margin-left: 90px; }
.cl { margin-left: 12px; }
.list { height: 156px; background: #fff; border: 1px solid #999; border-width: 1px 0; display: flex; }
.lmain { flex: 1; }
.lrow { display: grid; grid-template-columns: 71px 70px 60px 50px 55px 76px 74px 74px 91px 120px 120px; height: 17px; line-height: 17px; white-space: nowrap; }
.lhead { height: 16px; line-height: 14px; background: #ececec; border-bottom: 2px solid #888; padding-left: 1px; text-align: center; }
.lhead > span { border-right: 1px solid #aaa; }
.lhead > span:first-child { padding-right: 8px; }
.lhead > span:nth-child(2) { padding-right: 4px; }
.lbody { padding: 2px 0 0 1px; }
.code { display: flex; align-items: center; }
.fic { width: 12px; height: 14px; margin: 0 3px 0 2px; flex: none; }
.pic { width: 12px; height: 14px; margin: 0 5px 0 2px; flex: none; }
.nm { padding-left: 11px; margin-top: -1px; }
.nm.ind6 { padding-left: 17px; }
.ab { font: bold 12px "Liberation Serif", serif; }
.c { text-align: center; }
.ra { text-align: right; padding-right: 6px; }
.lrow > .n, .code > .n { padding-top: 2px; }
.lscroll { width: 18px; background: #f0f0f0; position: relative; }
.lthumb { display: block; height: 17px; background: #cdcdcd; margin-top: 2px; }
.arrow.dn { position: absolute; bottom: 0; left: 0; right: 0; }
.dtabs { height: 32px; display: flex; align-items: flex-end; position: relative; border-bottom: 1px solid #999; }
.dtab { width: 90px; height: 25px; line-height: 24px; text-align: center; border: 1px solid #bbb; border-bottom: none; border-right-color: #777; }
.dtab.on { font-weight: 700; font-size: 13px; background: #f8f8f8; }
.watermark { position: absolute; left: 438px; top: -8px; font: bold 42px/44px "Liberation Sans", sans-serif; color: #c4c4c4; opacity: .8; white-space: nowrap; }
.detail { height: 430px; background: #fff; display: flex; }
.dbody { flex: 1; overflow: hidden; padding: 3px 0 0 3px; }
.dr { display: grid; grid-template-columns: 150px 120px 119px 120px; height: 16px; line-height: 16px; white-space: nowrap; }
.dr > .n { padding-top: 2px; }
.dline { width: 439px; height: 1px; background: #000; margin: 7px 0 8px; }
.pv { font-family: "Liberation Sans", sans-serif; color: #1a2a3a; padding-top: 1px; }
.alpha .pv:nth-child(3) { padding-left: 3px; }
.alpha .pv:nth-child(4) { padding-left: 6px; }
.beta .pv:nth-child(3) { padding-left: 6px; }
.beta .pv:nth-child(4) { padding-left: 12px; }
.dscroll { width: 16px; background: #f0f0f0; position: relative; }
.dthumb { display: block; height: 172px; background: #cdcdcd; margin-top: 2px; }
.w2foot { height: 9px; border-top: 1px solid #aaa; }

.capture { position: absolute; left: 322px; top: 281px; width: 170px; height: 21px; background: rgba(105, 105, 190, .5); border: 1px solid #6fa0f0; display: flex; justify-content: space-between; padding: 0 14px 0 27px; line-height: 19px; color: #111; z-index: 3; }

/* banner */
.banner { position: absolute; left: 1244px; top: 6px; width: 673px; height: 139px; background: #fff; border-bottom: 1px solid #777; z-index: 2; color: #f00; overflow: hidden; }
.bt { position: absolute; white-space: nowrap; transform-origin: 0 0; font-weight: 700; }
.b1 { left: 11px; top: -5px; font: 900 64px/74px "Noto Sans CJK SC", sans-serif; transform: scaleY(1.38); }
.b2 { top: -7px; font: 900 32px/40px "Noto Sans CJK SC", sans-serif; transform: scaleY(2); }
.p1 { left: 296px; } .p2 { left: 372px; } .p3 { left: 450px; } .p4 { left: 570px; }
.b3 { left: 2px; top: 96px; font: bold 40px/44px "Liberation Sans", sans-serif; transform: scaleX(.855); }
.b4 { left: 315px; top: 87px; font: 900 36px/50px "Noto Sans CJK SC", sans-serif; }
.b5 { left: 459px; top: 70px; font: bold 62px/72px "Liberation Sans", sans-serif; transform: scaleX(.87); }

.edgehandle { position: absolute; left: 0; top: 495px; }

.ime { position: absolute; left: 1733px; top: 890px; width: 184px; height: 26px; display: flex; align-items: center; z-index: 2; background: linear-gradient(90deg, transparent 22px, #fbfcff 22px); border-block: 1px solid transparent; background-clip: padding-box; }
.imelogo { flex: none; }
.imezh { color: #2a7ad0; font-weight: 700; font-size: 14px; margin: 0 8px 0 5px; }

.netw { position: absolute; left: 1413px; top: 993px; width: 126px; height: 47px; z-index: 2; }
.netball { position: absolute; left: 0; top: 0; width: 47px; height: 47px; border-radius: 50%; border: 3px solid #f4f4f4; background: linear-gradient(#0e6a48 0, #1a8a5a 48%, #52c870 52%, #4cc06a 100%); color: #fff; font: bold 13px/41px "Liberation Sans", sans-serif; text-align: center; box-shadow: 0 0 2px #444; }
.netpill { position: absolute; left: 22px; top: 5px; width: 104px; height: 36px; border-radius: 0 18px 18px 0; background: linear-gradient(#fff, #e0e0e0); padding: 3px 0 0 30px; font: 10px/15px "Liberation Sans", sans-serif; color: #222; }
.netrow { display: flex; gap: 7px; }
.upa { color: #e04020; font-weight: 700; }
.dna { color: #108040; font-weight: 700; }
.plus { position: absolute; left: 80px; top: 7px; width: 22px; height: 22px; border-radius: 50%; background: #3a7fe0; color: #fff; font: bold 16px/22px "Liberation Sans", sans-serif; text-align: center; }
.reddot { position: absolute; left: 91px; top: 2px; width: 9px; height: 9px; border-radius: 50%; background: #e02020; }
```
